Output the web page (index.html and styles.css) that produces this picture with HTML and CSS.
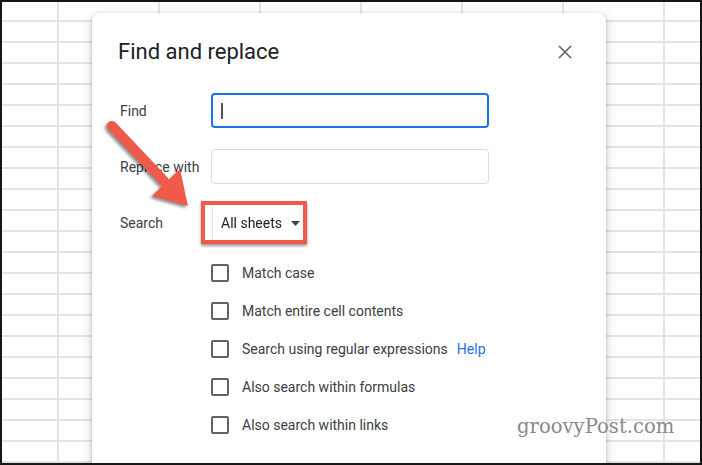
FILE: index.html
```html
<!DOCTYPE html>
<html lang="en">
<head>
    <meta charset="UTF-8">
    <title>Find and replace</title>
    <link rel="stylesheet" href="styles.css">
</head>
<body>
    <div class="frame">
        <div class="dialog">
            <div class="dialog-head">
                <h1 class="title">Find and replace</h1>
                <span class="close">
                    <svg width="14" height="14" viewBox="0 0 14 14"><path d="M1 1 13 13M13 1 1 13" stroke="#5f6368" stroke-width="1.6" fill="none"/></svg>
                </span>
            </div>

            <div class="form">
                <div class="label">Find</div>
                <div class="field focused"><span class="caret"></span></div>

                <div class="label">Replace with</div>
                <div class="field"></div>

                <div class="label">Search</div>
                <div class="search-cell">
                    <span class="highlight">
                        <span class="dropdown">All sheets
                            <svg class="drop-caret" width="9" height="5" viewBox="0 0 9 5"><path d="M0 0h9L4.5 5z" fill="#444"/></svg>
                        </span>
                    </span>
                </div>
            </div>

            <ul class="options">
                <li><span class="box"></span>Match case</li>
                <li><span class="box"></span>Match entire cell contents</li>
                <li><span class="box"></span>Search using regular expressions <a class="help" href="#">Help</a></li>
                <li><span class="box"></span>Also search within formulas</li>
                <li><span class="box"></span>Also search within links</li>
            </ul>
        </div>

        <svg class="arrow" width="702" height="465" viewBox="0 0 702 465">
            <g class="arrow-shape">
                <line x1="112" y1="126" x2="164" y2="181" stroke="#ef5a4b" stroke-width="10" stroke-linecap="round"/>
                <polygon points="188,206 180,169 152,196" fill="#ef5a4b"/>
            </g>
        </svg>

        <div class="watermark">groovyPost.com</div>
    </div>
</body>
</html>
```

FILE: styles.css
```css
* {
    box-sizing: border-box;
}
body {
    margin: 0;
    font-family: Roboto, "Liberation Sans", sans-serif;
}
.frame {
    position: relative;
    width: 702px;
    height: 465px;
    overflow: hidden;
    border: 2px solid #151515;
    background-color: #fff;
    background-image:
        linear-gradient(to right, transparent 55px, #e4e4e4 55px, #e4e4e4 57px, transparent 57px),
        linear-gradient(to bottom, transparent 18px, #e4e4e4 18px, #e4e4e4 20px, transparent 20px);
    background-size: 101px 100%, 100% 21px;
}

/* dialog */
.dialog {
    position: absolute;
    left: 90px;
    top: 11px;
    width: 514px;
    height: 480px;
    background: #fff;
    border-radius: 8px;
    box-shadow: 0 4px 8px 3px rgba(60, 64, 67, 0.15), 0 1px 3px rgba(60, 64, 67, 0.3);
    padding: 25px 29px 0 26px;
}
.dialog-head {
    display: flex;
    justify-content: space-between;
    align-items: center;
    height: 28px;
}
.title {
    margin: 0;
    font-size: 22px;
    line-height: 28px;
    font-weight: 400;
    color: #202124;
}
.close {
    display: flex;
    width: 24px;
    height: 24px;
    align-items: center;
    justify-content: center;
}

.form {
    display: grid;
    grid-template-columns: 93px 278px;
    grid-auto-rows: 35px;
    row-gap: 21px;
    margin-top: 27px;
    align-items: center;
}
.label {
    font-size: 14px;
    color: #3c4043;
    padding-left: 2px;
    padding-top: 1px;
}
.field {
    height: 35px;
    border: 1px solid #dadce0;
    border-radius: 4px;
    display: flex;
    align-items: center;
    padding-left: 8px;
}
.field.focused {
    border: 2px solid #1a73e8;
}
.caret {
    width: 1.5px;
    height: 16px;
    background: #555;
}

.search-cell {
    display: flex;
    align-items: center;
}
.highlight {
    display: flex;
    width: 106px;
    height: 43px;
    margin-left: -10px;
    border: 4px solid #ef5a4b;
    padding-left: 7px;
    filter: drop-shadow(0 2px 1.5px rgba(0, 0, 0, 0.4));
    background: #fff;
}
.dropdown {
    display: flex;
    align-items: center;
    flex: 1;
    border-left: 1px solid #e3e3e3;
    padding-left: 8px;
    padding-top: 1px;
    font-size: 14px;
    color: #202124;
}
.drop-caret {
    margin-left: 9px;
}

.options {
    list-style: none;
    margin: 14px 0 0;
    padding: 0 0 0 93px;
}
.options li {
    display: flex;
    align-items: center;
    height: 38px;
    font-size: 14px;
    color: #3c4043;
}
.box {
    width: 18px;
    height: 18px;
    border: 2px solid #5f6368;
    border-radius: 2px;
    margin-right: 13px;
}
.help {
    color: #1a73e8;
    text-decoration: none;
    margin-left: 9px;
}

/* annotations */
.arrow {
    position: absolute;
    left: -2px;
    top: -2px;
    pointer-events: none;
}
.arrow-shape {
    filter: drop-shadow(-1.5px 2px 1.5px rgba(0, 0, 0, 0.45));
}
.watermark {
    position: absolute;
    left: 515px;
    top: 413px;
    font-family: "DejaVu Serif", serif;
    font-size: 19.6px;
    color: #8a8a8a;
}
```
